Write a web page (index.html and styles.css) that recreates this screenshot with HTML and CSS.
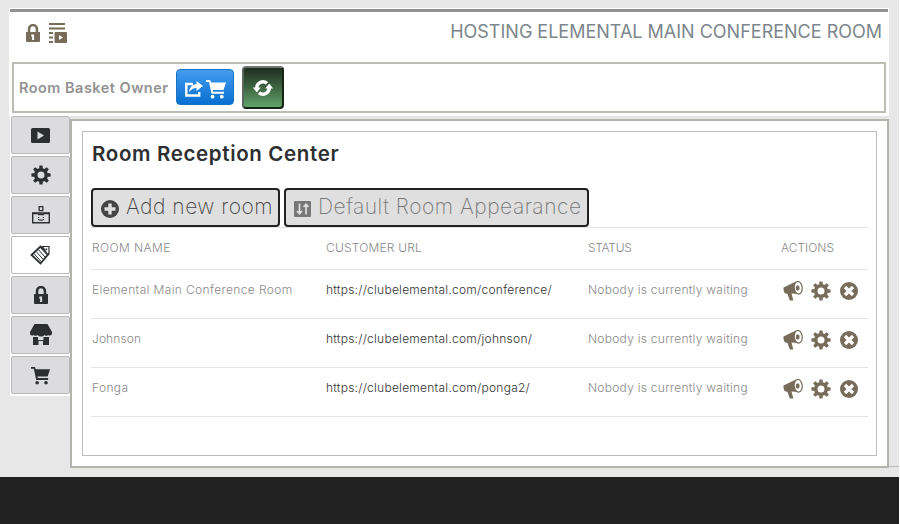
FILE: index.html
```html
<!DOCTYPE html>
<html lang="en">
<head>
<meta charset="utf-8">
<title>Room Reception Center</title>
<link rel="stylesheet" href="styles.css">
</head>
<body>
<svg class="defs" aria-hidden="true">
  <symbol id="lock" viewBox="0 0 14 18"><path fill-rule="evenodd" d="M0 8h1.800V5.200C1.800 2 4 0 7 0s5.200 2 5.200 5.200V8H14v9q0 1-1 1H1q-1 0-1-1zM4.300 8h5.400V5.200C9.700 3.400 8.600 2.300 7 2.300S4.300 3.400 4.300 5.200zM5.300 10.500v2l.8.4V16h2v-5.500z"/></symbol>
  <symbol id="gear" viewBox="-10 -10 20 20"><path fill-rule="evenodd" d="M0-7a7 7 0 1 0 0 14A7 7 0 1 0 0-7zm0 3.500a3.500 3.500 0 1 1 0 7a3.500 3.500 0 1 1 0-7z"/><path id="teeth" d="M-1.900-6.300-1.500-9.600h3L1.900-6.300zM-1.900 6.300-1.500 9.600h3L1.900 6.300zM-6.300-1.900-9.600-1.500v3L-6.300 1.900zM6.300-1.900 9.600-1.500v3L6.300 1.900z"/><use href="#teeth" transform="rotate(45)"/></symbol>
  <symbol id="cart" viewBox="0 0 20 20"><path d="M0 1h4.200l.8 2.500h15L17.500 11H6.800l.4 1.700H18v2H5.500L3 3H0z"/><circle cx="6.500" cy="17.700" r="1.900"/><circle cx="15.800" cy="17.700" r="1.900"/></symbol>
  <symbol id="horn" viewBox="0 0 20 20"><path d="M.5 6.500 13 .5C11 5 12 10 15 13L8.500 12.500l1.800 7H6.800L4.500 13 1.500 12Q0 9.500.5 6.500z"/><ellipse class="bell" cx="15.200" cy="6.800" rx="4" ry="6.300" transform="rotate(-5 15.200 6.800)"/><ellipse cx="14.700" cy="7" rx="1.900" ry="2.700"/></symbol>
  <symbol id="close" viewBox="0 0 18 18"><circle cx="9" cy="9" r="9"/><path d="M5 5l8 8M13 5l-8 8" stroke="#fff" stroke-width="3.400"/></symbol>
</svg>
<div class="page">
  <header class="top">
    <div class="bar"></div>
    <div class="title-row">
      <svg class="t-lock"><use href="#lock"/></svg>
      <svg class="t-list" viewBox="0 0 18 20"><path d="M0 0h16v2H0zM0 4.500h16v2H0zM0 9h4v2H0zM0 13.500h4v2H0zM0 18h4v2H0z"/><path fill-rule="evenodd" d="M6.500 9H17q1 0 1 1v9q0 1-1 1H6.500q-1 0-1-1v-9q0-1 1-1zM10 12v5l4-2.500z"/></svg>
      <h1>HOSTING ELEMENTAL MAIN CONFERENCE ROOM</h1>
    </div>
    <div class="basket">
      <span class="owner">Room Basket Owner</span>
      <button class="blue">
        <svg class="share" viewBox="0 0 18 16"><path class="line" d="M8 3H1.300v11.500h12.900V11" stroke-width="2.400"/><path d="M11.500 0 18 5l-6.500 5V7Q6.500 7 4 11.500 4.500 3.500 11.500 3z"/></svg>
        <svg class="b-cart"><use href="#cart"/></svg>
      </button>
      <button class="green">
        <svg viewBox="0 0 20 18"><path class="line" d="M3.800 9.500A6.200 6.200 0 0 1 14 4.300M16.200 8.500A6.200 6.200 0 0 1 6 13.700" stroke-width="3.400"/><path d="M-.2 8.500h8l-4 5zM20.200 9.500h-8l4-5z"/></svg>
      </button>
    </div>
  </header>
  <div class="body">
    <nav class="tabs">
      <a class="tab"><svg width="19" height="15" viewBox="0 0 19 15"><path fill-rule="evenodd" d="M1.500 0h16Q19 0 19 1.500v12q0 1.500-1.500 1.500h-16Q0 15 0 13.500v-12Q0 0 1.500 0zM6.500 3.500v8l6.500-4z"/></svg></a>
      <a class="tab"><svg width="20" height="20"><use href="#gear"/></svg></a>
      <a class="tab"><svg class="line" width="18" height="18" viewBox="0 0 18 18"><path d="M7.200.7h3.600v4H7.200z" stroke-width="1.300"/><path d="M.7 7h16.600v9.800H.7z" stroke-width="1.400"/><path d="M1 7.500h5.500M11.500 7.500H17M6 8.500h6" stroke-width="1.600"/><path d="M6 11.500h1.200M10.800 11.500H12M6 13.500q3 1.200 6 0" stroke-width="1.100"/></svg></a>
      <a class="tab active"><svg width="22" height="22" viewBox="0 0 22 22"><path class="paper" d="M1.500 11 10.500 2.500l8 7.500-8 9.500z" stroke-width="1.800"/><path class="line" d="M4.200 9.800l7.200 8M6.400 7.800l6.800 7.600M8.600 5.800l6.400 7.200M10.800 4l6 6.600" stroke-width="1"/><path class="paper" d="M12.500 2.500H19v6.500l-1.500 1.500z" stroke-width="1.200"/><path d="M15.500 4.500h1.700v1.700h-1.700z"/></svg></a>
      <a class="tab"><svg width="14" height="18"><use href="#lock"/></svg></a>
      <a class="tab"><svg width="22" height="22" viewBox="0 0 22 22"><path d="M4.500 0h13L22 8v2q-1.500 2.500-4 1-1.500 1.700-3.500 0-1.500 1.700-3.500 1.500Q9 12.500 7.500 11 5.500 12.700 4 11 1 12.500 0 10V8zM3 13h5v3h5.500v-3H19v8h-6v-4H8.500v4H3z"/></svg></a>
      <a class="tab"><svg width="19" height="19"><use href="#cart"/></svg></a>
    </nav>
    <main class="panel">
      <section class="inner">
        <h2>Room Reception Center</h2>
        <div class="buttons">
          <button class="btn add"><svg width="18" height="18" viewBox="0 0 18 18"><circle cx="9" cy="9" r="9"/><path d="M9 3.500v11M3.500 9h11" stroke="#dfdfdf" stroke-width="3.400"/></svg><span>Add new room</span></button>
          <button class="btn look"><svg width="17" height="16" viewBox="0 0 17 16"><rect width="17" height="16" rx="1"/><path class="knobs" d="M5.500 2.500v10M3 10l2.500 2.700L8 10M12 3.500v10M9.500 6 12 3.300 14.500 6"/></svg><span>Default Room Appearance</span></button>
        </div>
        <div class="table">
          <div class="row head"><span class="h-name">ROOM NAME</span><span class="h-url">CUSTOMER URL</span><span class="h-status">STATUS</span><span>ACTIONS</span></div>
          <div class="row"><span class="name">Elemental Main Conference Room</span><a class="url">https://clubelemental.com/conference/</a><span class="status">Nobody is currently waiting</span><span class="actions"><svg><use href="#horn"/></svg><svg><use href="#gear"/></svg><svg class="x"><use href="#close"/></svg></span></div>
          <div class="row"><span class="name short">Johnson</span><a class="url">https://clubelemental.com/johnson/</a><span class="status">Nobody is currently waiting</span><span class="actions"><svg><use href="#horn"/></svg><svg><use href="#gear"/></svg><svg class="x"><use href="#close"/></svg></span></div>
          <div class="row"><span class="name">Fonga</span><a class="url">https://clubelemental.com/ponga2/</a><span class="status">Nobody is currently waiting</span><span class="actions"><svg><use href="#horn"/></svg><svg><use href="#gear"/></svg><svg class="x"><use href="#close"/></svg></span></div>
        </div>
      </section>
    </main>
    <div class="edge"></div>
  </div>
  <footer></footer>
</div>
</body>
</html>
```
FILE: styles.css
```css
* { box-sizing: border-box; }
body { margin: 0; background: #fff; font-family: Inter, "Open Sans", sans-serif; }
svg { display: block; fill: currentColor; flex: none; overflow: visible; }
.line { fill: none; stroke: currentColor; }
.paper { fill: #fff; stroke: currentColor; }
.knobs { fill: none; stroke: #dfdfdf; stroke-width: 1.7; }
.bell { fill: #fff; stroke: currentColor; stroke-width: 1.2; }
.defs { position: absolute; width: 0; height: 0; }
h1, h2 { margin: 0; }
button { margin: 0; padding: 0; font: inherit; }
.page { width: 899px; height: 524px; background: #e7e7e7; padding-top: 8px; display: flex; flex-direction: column; }
.top { width: 880px; height: 108px; margin-left: 9px; padding: 1px 1px 0; background: #fff; flex: none; }
.bar { height: 3px; background: #929292; }
.title-row { height: 50px; display: flex; align-items: flex-start; padding: 11px 6px 0 16px; color: #776c59; }
.t-lock { width: 14px; height: 18px; margin-top: 1px; }
.t-list { width: 18px; height: 20px; margin-left: 9px; }
h1 { margin-left: auto; margin-top: -3px; font-size: 18px; line-height: 24px; font-weight: 400; color: #7c868c; white-space: nowrap; }
.basket { margin: 0 2px; height: 51px; border: 2px solid #bdbdb5; display: flex; align-items: center; padding-left: 5px; }
.owner { width: 157px; font-size: 14.5px; letter-spacing: .48px; font-weight: 600; color: #929292; white-space: nowrap; }
.blue { width: 58px; height: 36px; margin-top: -1px; border: 1px solid #1873c4; border-radius: 4px; background: linear-gradient(#439cee, #0870d2); color: #fff; display: flex; align-items: center; padding: 3px 0 0 8px; }
.share { width: 18px; height: 16px; }
.b-cart { width: 20px; height: 20px; margin-left: 3px; }
.green { width: 42px; height: 43px; margin-left: 8px; border: 2px solid #14260f; border-top-color: #707670; border-left-color: #5d665d; border-radius: 4px; background: linear-gradient(#202d21, #3d6541 50%, #61a36a); color: #fff; display: flex; align-items: center; justify-content: center; }
.green svg { width: 20px; height: 18px; }
.body { display: flex; height: 361px; flex: none; padding-left: 10px; }
.tabs { width: 60px; height: 280px; background: #fff; padding-left: 1px; display: flex; flex-direction: column; gap: 2px; }
.tab { width: 59px; height: 38px; border: 1px solid #b9b9b9; border-radius: 2px; background: #dcdcde; color: #2c2e31; display: flex; align-items: center; justify-content: center; flex: none; }
.tab.active { background: #fff; }
.panel { width: 819px; height: 349px; margin-top: 3px; border: 2px solid #b4b4ae; background: #fff; padding: 10px; }
.inner { width: 795px; height: 325px; border: 1px solid #bcbcbc; padding: 0 8px; }
h2 { height: 56px; padding: 10px 0 0 1px; font-size: 20.5px; letter-spacing: .65px; line-height: 24px; font-weight: 600; color: #2d2f31; white-space: nowrap; }
.buttons { display: flex; gap: 4px; }
.btn { height: 39px; border: 2px solid #222; border-radius: 4px; background: #dfdfdf; display: flex; align-items: center; padding-left: 8px; font-size: 21px; font-weight: 200; letter-spacing: .5px; white-space: nowrap; }
.btn span { margin-top: -2px; }
.btn svg { margin-top: 3px; }
.add { width: 189px; color: #444; gap: 7px; }
.look { width: 305px; color: #777; gap: 7px; }
.table { font-size: 12px; color: #8a8a8a; }
.row { height: 49px; border-bottom: 1px solid #e4e4e4; display: grid; grid-template-columns: 234px 262px 193px 1fr; padding-left: 1px; line-height: 15px; padding-top: 12px; white-space: nowrap; width: 777px; font-weight: 350; }
.head { height: 43px; border-top: 1px solid #e4e4e4; padding-top: 12px; }
.h-name { letter-spacing: .4px; }
.h-url { letter-spacing: .2px; }
.h-status { letter-spacing: -.3px; }
.name { letter-spacing: .37px; }
.short { letter-spacing: .1px; }
.url { color: #333; letter-spacing: .25px; }
.status { letter-spacing: .26px; }
.actions { display: flex; height: 20px; margin-top: -1px; gap: 8px; padding-left: 2px; color: #776c59; }
.actions svg { width: 20px; height: 20px; }
.actions .x { width: 18px; height: 18px; margin: 1px 0 0 1px; }
.edge { width: 10px; height: 1px; margin-top: 350px; background: #bbb; }
footer { height: 47px; background: #212121; margin-top: auto; }
```
